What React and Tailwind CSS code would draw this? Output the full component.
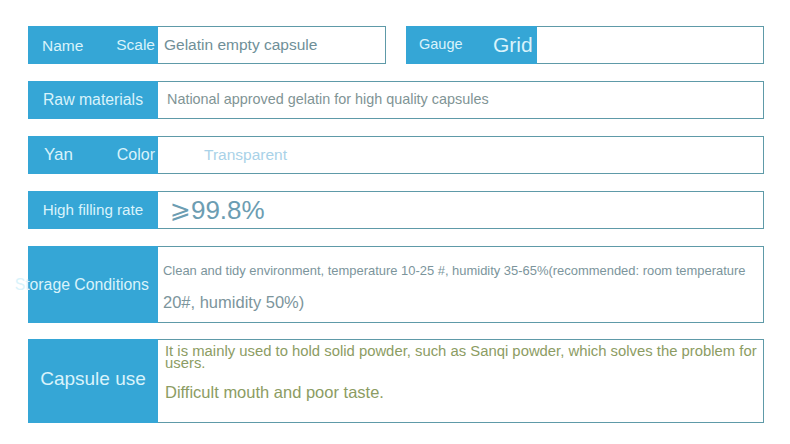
export default function App() {
  const blue = "bg-[#35a6d6] shrink-0";
  const lbl = "text-[#d9f3fb]";
  return (
    <div className="w-[790px] h-[444px] bg-white relative overflow-hidden" style={{ fontFamily: '"Liberation Sans", Arial, sans-serif' }}>
      <div className="flex flex-col pl-[28px] pt-[26px] w-[764px]">
        {/* Row 1 */}
        <div className="flex gap-[20px] h-[38px]">
          <div className="flex w-[358px] border border-[#5e9aa8]">
            <div className={`${blue} ${lbl} w-[130px] -my-px -ml-px flex items-center justify-between pl-[14px] pr-[3px] text-[15.5px]`}>
              <span className="pt-[2px]">Name</span>
              <span>Scale</span>
            </div>
            <div className="flex items-center pl-[6px] text-[15.5px] text-[#6f8f98]">Gelatin empty capsule</div>
          </div>
          <div className="flex flex-1 border border-[#5e9aa8]">
            <div className={`${blue} ${lbl} w-[131px] -my-px -ml-px flex items-center pl-[13px] text-[14.5px]`}>
              <span className="w-[74px]">Gauge</span>
              <span className="text-[21px]">Grid</span>
            </div>
          </div>
        </div>
        {/* Row 2 */}
        <div className="flex h-[38px] mt-[17px] border border-[#5e9aa8]">
          <div className={`${blue} ${lbl} w-[130px] -my-px -ml-px flex items-center justify-center text-[15.8px]`}>Raw materials</div>
          <div className="flex items-center pl-[9px] text-[14.4px] text-[#7f9495]">National approved gelatin for high quality capsules</div>
        </div>
        {/* Row 3 */}
        <div className="flex h-[38px] mt-[17px] border border-[#5e9aa8]">
          <div className={`${blue} ${lbl} w-[130px] -my-px -ml-px flex items-center justify-between pl-[16px] pr-[3px]`}>
            <span className="text-[17px]">Yan</span>
            <span className="text-[16px]">Color</span>
          </div>
          <div className="flex items-center pl-[46px] text-[15.5px] text-[#a9d2e8]">Transparent</div>
        </div>
        {/* Row 4 */}
        <div className="flex h-[38px] mt-[17px] border border-[#5e9aa8]">
          <div className={`${blue} ${lbl} w-[130px] -my-px -ml-px flex items-center justify-center text-[15.2px]`}>High filling rate</div>
          <div className="flex items-center pl-[12px] text-[26px] text-[#6c9db2]">
            <span style={{ fontFamily: '"DejaVu Sans", sans-serif' }} className="text-[25px]">⩾</span>
            <span>99.8%</span>
          </div>
        </div>
        {/* Row 5 */}
        <div className="flex h-[77px] mt-[17px] border border-[#5e9aa8]">
          <div className={`${blue} ${lbl} w-[130px] -my-px -ml-px flex items-center justify-end pr-[9px] text-[15.8px] whitespace-nowrap overflow-visible`}>
            <span>Storage Conditions</span>
          </div>
          <div className="flex flex-col pl-[5px] pt-[16px] text-[#7c959c]">
            <div className="text-[12.95px] leading-[15px] whitespace-nowrap">Clean and tidy environment, temperature 10-25 #, humidity 35-65%(recommended: room temperature</div>
            <div className="text-[16.5px] leading-[20px] mt-[14px]">20#, humidity 50%)</div>
          </div>
        </div>
        {/* Row 6 */}
        <div className="flex h-[84px] mt-[16px] border border-[#5e9aa8]">
          <div className={`${blue} ${lbl} w-[130px] -my-px -ml-px flex items-center justify-center text-[19px] pb-[4px]`}>Capsule use</div>
          <div className="flex flex-col pl-[7px] pt-[5px] text-[#8c9c63]">
            <div className="text-[14.85px] leading-[12px] w-[600px]">It is mainly used to hold solid powder, such as Sanqi powder, which solves the problem for users.</div>
            <div className="text-[16.5px] leading-[20px] mt-[13px]">Difficult mouth and poor taste.</div>
          </div>
        </div>
      </div>
    </div>
  );
}
